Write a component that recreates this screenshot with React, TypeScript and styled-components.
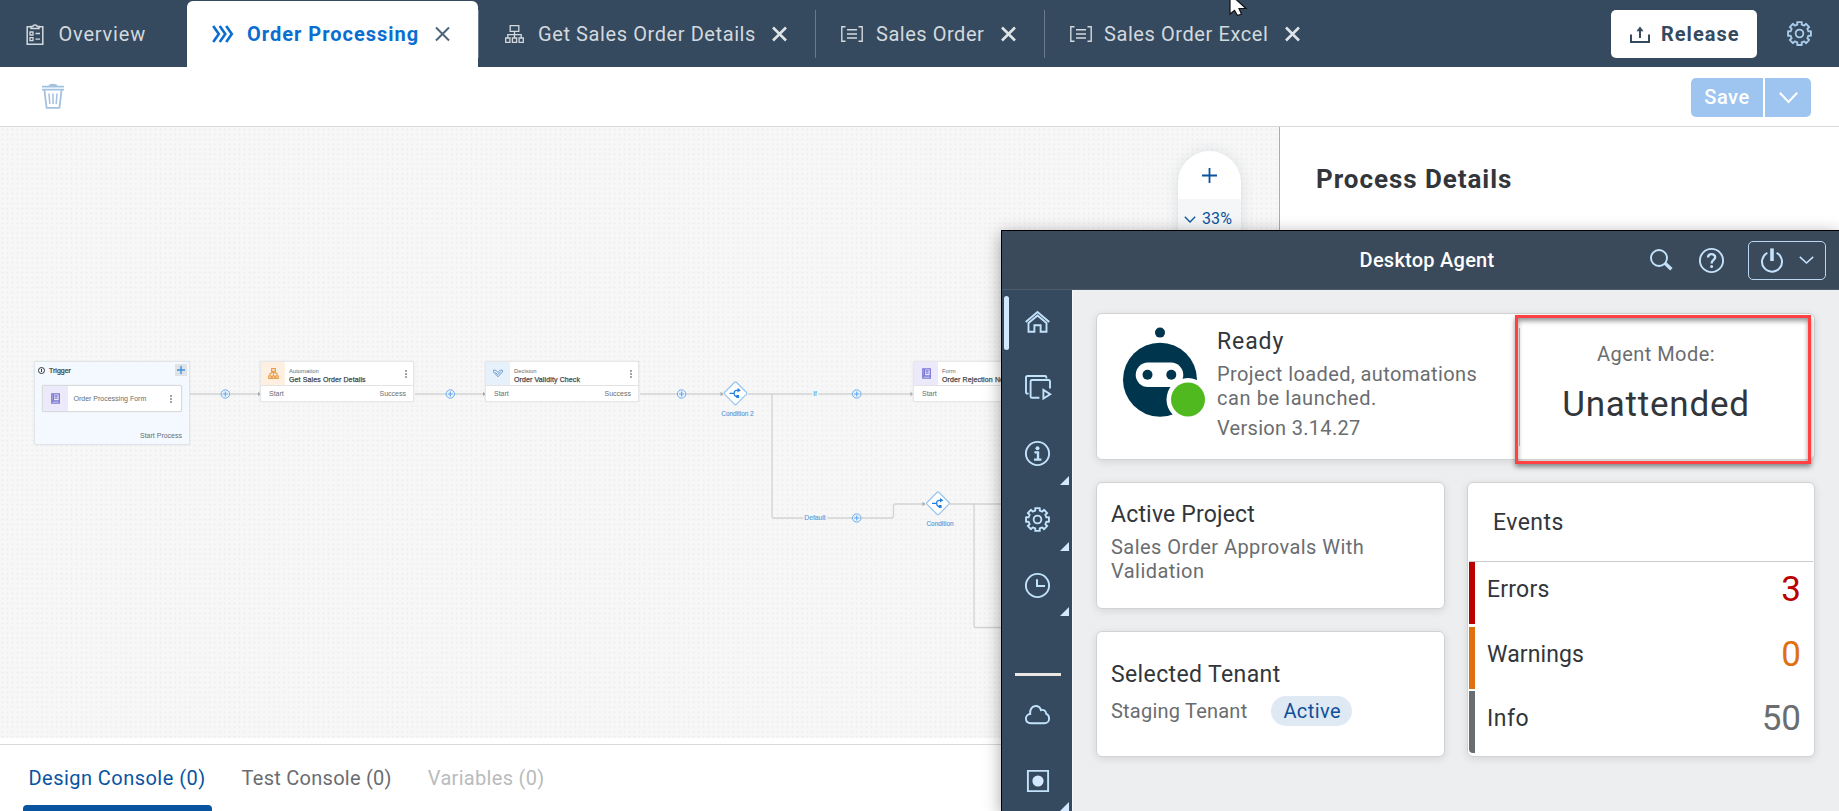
import React from 'react';
import styled, { createGlobalStyle, css } from 'styled-components';

const GlobalStyle = createGlobalStyle`
  *, *::before, *::after { box-sizing: border-box; }
  html, body { margin: 0; padding: 0; height: 100%; overflow: hidden; }
  body { font-family: Roboto, "Liberation Sans", sans-serif; font-size: 20px; line-height: 24px; color: #32363a; background: #fff; }
  svg { display: block; flex: none; overflow: visible; }
`;

/* ---------- shared ---------- */

const Text = styled.span<{ $ls?: number }>`
  white-space: nowrap;
  letter-spacing: ${(p) => p.$ls ?? 0.5}px;
`;

const Shell = styled.div`
  position: relative;
  display: flex;
  flex-direction: column;
  width: 1839px;
  height: 811px;
  overflow: hidden;
  background: #fff;
`;

/* ---------- header ---------- */

const TabBar = styled.header`
  display: flex;
  height: 67px;
  flex: none;
  align-items: stretch;
  background: #354a5f;
`;

const Tab = styled.div<{ $w: number; $active?: boolean; $sep?: boolean }>`
  position: relative;
  display: flex;
  align-items: center;
  width: ${(p) => p.$w}px;
  padding: 1px 29px 0 25px;
  color: #d3d9de;
  ${(p) =>
    p.$active &&
    css`
      margin-top: 1px;
      padding-top: 0;
      padding-right: 28px;
      background: #fff;
      border-radius: 6px 6px 0 0;
      color: #0a6ed1;
      font-weight: 700;
    `}
  ${(p) =>
    p.$sep &&
    css`
      &::after {
        content: '';
        position: absolute;
        right: ${p.$active ? -1 : 0}px;
        top: ${p.$active ? 9 : 10}px;
        width: 1.5px;
        height: 48px;
        background: #6b7b8d;
      }
    `}
`;

const TabIcon = styled.span<{ $w?: number; $in?: number }>`
  display: flex;
  width: ${(p) => p.$w ?? 35}px;
  padding-left: ${(p) => p.$in ?? 0}px;
  flex: none;
`;

const TabClose = styled.span`
  margin-left: auto;
`;

const HeaderActions = styled.div`
  display: flex;
  align-items: center;
  gap: 30px;
  margin-left: auto;
  padding-right: 27px;
`;

const ReleaseButton = styled.button`
  display: flex;
  align-items: center;
  gap: 11px;
  width: 146px;
  height: 48px;
  padding: 0 0 0 19px;
  border: 0;
  border-radius: 5px;
  background: #fff;
  color: #354a5f;
  font: 700 20px/24px Roboto, sans-serif;
  margin-top: 1px;
`;

/* ---------- toolbar ---------- */

const Toolbar = styled.div`
  display: flex;
  align-items: center;
  justify-content: space-between;
  flex: none;
  height: 60px;
  padding: 0 28px 0 42px;
  border-bottom: 1px solid #d9d9d9;
  background: #fff;
`;

const SaveGroup = styled.div`
  display: flex;
  gap: 2px;
  height: 39px;
  margin-top: 1px;
`;

const SavePart = styled.button<{ $w: number; $side: 'left' | 'right' }>`
  display: flex;
  align-items: center;
  justify-content: center;
  width: ${(p) => p.$w}px;
  padding: 0;
  border: 0;
  border-radius: ${(p) => (p.$side === 'left' ? '5px 0 0 5px' : '0 5px 5px 0')};
  background: #9dc5ef;
  color: #fff;
  font: 500 20px/24px Roboto, sans-serif;
`;

/* ---------- workspace ---------- */

const Workspace = styled.main`
  display: flex;
  flex: 1;
  min-height: 0;
`;

const DesignColumn = styled.section`
  display: flex;
  flex-direction: column;
  width: 1279px;
  flex: none;
`;

const Canvas = styled.div`
  position: relative;
  flex: 1;
  overflow: hidden;
  background-color: #f7f7f7;
  background-image: radial-gradient(circle at center, #e9e9e9 0.6px, rgba(247, 247, 247, 0) 1.2px);
  background-size: 4.95px 4.95px;
  font-family: 'Liberation Sans', Arial, sans-serif;
`;

const DetailsPanel = styled.aside`
  flex: 1;
  border-left: 1px solid #a9adb0;
  padding: 36px;
  background: #fff;
`;

const PanelTitle = styled.h2`
  margin: 0;
  font-size: 26px;
  line-height: 32px;
  font-weight: 700;
  letter-spacing: 0.95px;
`;

const ConsoleBar = styled.footer`
  display: flex;
  flex: none;
  height: 67px;
  margin-top: 6px;
  padding-left: 23px;
  border-top: 1px solid #d9d9d9;
`;

const ConsoleTab = styled.div<{ $state: 'active' | 'normal' | 'off' }>`
  display: flex;
  position: relative;
  align-items: center;
  padding: 0 6px 0 5.5px;
  margin-right: 24.500px;
  color: ${(p) => ({ active: '#0854a0', normal: '#6a6d70', off: '#b9bbbd' })[p.$state]};
  ${(p) =>
    p.$state === 'active' &&
    css`
      &::after {
        content: '';
        position: absolute;
        left: 0;
        right: 0;
        bottom: 0;
        height: 6px;
        border-radius: 4px 4px 0 0;
        background: #0854a0;
      }
    `}
`;

const ZoomControl = styled.div`
  position: absolute;
  left: 1178px;
  top: 24px;
  width: 63px;
  height: 160px;
  border-radius: 32px;
  overflow: hidden;
  background: #fff;
  box-shadow: 0 0 14px rgba(80, 100, 120, 0.16);
  font-family: Roboto, sans-serif;
`;

const ZoomPlus = styled.div`
  display: flex;
  align-items: center;
  justify-content: center;
  height: 48px;
`;

const ZoomLevel = styled.div`
  display: flex;
  align-items: center;
  gap: 6px;
  height: 40px;
  padding-left: 6px;
  background: #f5f6f7;
  color: #0854a0;
  font-size: 16px;
`;

/* ---------- diagram ---------- */

const Wires = styled.svg`
  position: absolute;
  left: 0;
  top: 0;
`;

const NodeBox = styled.div<{ $x: number }>`
  position: absolute;
  left: ${(p) => p.$x}px;
  top: 234px;
  width: 154px;
  height: 41px;
  border: 1px solid #e6e7e8;
  border-radius: 2px;
  background: #fff;
  box-shadow: 0 0 2px rgba(0, 0, 0, 0.1);
  font-size: 7px;
  line-height: 9px;
  color: #6a6d70;
`;

const NodeTop = styled.div`
  display: flex;
  height: 24px;
  border-bottom: 1px solid #e3e3e3;
`;

const NodeIcon = styled.div<{ $bg: string }>`
  display: flex;
  align-items: center;
  justify-content: center;
  width: 24px;
  background: ${(p) => p.$bg};
`;

const NodeTitles = styled.div`
  display: flex;
  flex-direction: column;
  flex: 1;
  padding: 5px 0 0 4px;
  white-space: nowrap;
`;

const NodeKind = styled.span`
  font-size: 5.9px;
  line-height: 8px;
`;

const NodeTitle = styled.span`
  font-size: 7px;
  line-height: 9px;
  letter-spacing: 0.12px;
  color: #46494d;
  -webkit-text-stroke: 0.25px #46494d;
`;

const NodePorts = styled.div`
  display: flex;
  justify-content: space-between;
  padding: 3px 7px 0 8px;
`;

const Kebab = styled.div`
  display: flex;
  flex-direction: column;
  gap: 1px;
  margin: 7.5px 6px 0 0;
  &::before, &::after { content: ''; width: 1.6px; height: 2px; background: #a3a6aa; }
`;

const KebabDot = styled.i`
  width: 1.6px;
  height: 2px;
  background: #a3a6aa;
`;

const TriggerBox = styled.div`
  position: absolute;
  left: 34px;
  top: 234px;
  width: 156px;
  height: 84px;
  display: flex;
  flex-direction: column;
  padding: 2px 2px 3px 3px;
  border: 1px solid #dfe5ea;
  border-radius: 2px;
  background: #f3f9ff;
  box-shadow: 0 0 2px rgba(0, 0, 0, 0.1);
  font-size: 7px;
  line-height: 9px;
  color: #6a6d70;
`;

const TriggerHead = styled.div`
  display: flex;
  align-items: center;
  gap: 4px;
  height: 12px;
  color: #32363a;
  -webkit-text-stroke: 0.2px #32363a;
`;

const AddTrigger = styled.div`
  display: flex;
  align-items: center;
  justify-content: center;
  width: 12px;
  height: 12px;
  margin-left: auto;
  background: #e0e3e6;
`;

const TriggerItem = styled.div`
  display: flex;
  align-items: center;
  width: 140px;
  height: 27px;
  margin: 9px 0 0 4px;
  border: 1px solid #d8dadc;
  border-radius: 2px;
  background: #fff;
  overflow: hidden;
  box-shadow: 0 0 1px rgba(0, 0, 0, 0.2);
  & > ${NodeIcon} { height: 100%; width: 25px; margin-right: 5.5px; }
  & > ${Kebab} { margin: 0 9px 0 auto; }
`;

const TriggerOut = styled.div`
  margin: auto 5px 1px auto;
`;

const Caption = styled.span<{ $x: number; $y: number; $size?: number; $fill?: boolean }>`
  position: absolute;
  left: ${(p) => p.$x}px;
  top: ${(p) => p.$y}px;
  transform: translateX(-50%);
  padding: 0 1px;
  white-space: nowrap;
  font-size: ${(p) => p.$size ?? 6.4}px;
  line-height: 8px;
  color: #5a9fe0;
  -webkit-text-stroke: 0.15px #5a9fe0;
  background: ${(p) => (p.$fill ? '#f7f7f7' : 'transparent')};
`;

/* ---------- agent window ---------- */

const AgentWindow = styled.section`
  position: absolute;
  left: 1001px;
  top: 230px;
  width: 838px;
  height: 581px;
  display: flex;
  flex-direction: column;
  border-left: 1px solid #000;
  border-top: 1px solid #000;
  box-shadow: 0 4px 16px rgba(0, 0, 0, 0.36);
  background: #edeef0;
`;

const AgentHeader = styled.header`
  display: grid;
  grid-template-columns: 1fr auto 1fr;
  align-items: center;
  height: 59px;
  flex: none;
  padding: 0 13px 0 0;
  border-bottom: 1px solid #4d5c6b;
  background: #3a4a5b;
  color: #fff;
`;

const AgentTitle = styled(Text)`
  grid-column: 2;
  font-weight: 500;
  margin-left: 26px;
`;

const AgentTools = styled.div`
  display: flex;
  align-items: center;
  justify-content: flex-end;
`;

const SearchButton = styled.span`
  margin-right: 26px;
`;

const PowerButton = styled.button`
  display: flex;
  align-items: center;
  gap: 16px;
  width: 78px;
  height: 39px;
  margin-left: 24px;
  padding: 0 0 0 12px;
  border: 1px solid #b9d6f2;
  border-radius: 5px;
  background: transparent;
`;

const AgentBody = styled.div`
  display: flex;
  flex: 1;
  min-height: 0;
`;

const Rail = styled.nav`
  display: flex;
  flex-direction: column;
  flex: none;
  width: 71px;
  border-right: 1px solid #f6f7f8;
  background: #354a5f;
`;

const RailItem = styled.div<{ $h: number; $active?: boolean; $more?: boolean; $up?: number }>`
  position: relative;
  display: flex;
  align-items: center;
  justify-content: center;
  flex: none;
  height: ${(p) => p.$h}px;
  padding: 0 0 ${(p) => p.$up ?? 1}px 1px;
  ${(p) =>
    p.$active &&
    css`
      &::before {
        content: '';
        position: absolute;
        left: 2px;
        top: 6px;
        width: 5px;
        height: 54px;
        border-radius: 3px;
        background: #d1e8ff;
      }
    `}
  ${(p) =>
    p.$more &&
    css`
      &::after {
        content: '';
        position: absolute;
        right: 3px;
        bottom: 2px;
        border-left: 9px solid transparent;
        border-bottom: 9px solid #d1e8ff;
      }
    `}
`;

const RailDivider = styled.hr`
  width: 46px;
  height: 3px;
  margin: 55px 0 0 13px;
  border: 0;
  background: #ebe7e4;
  flex: none;
`;

const Board = styled.div`
  display: grid;
  grid-template-columns: 349px 348px;
  grid-template-rows: 147px 127px 126px;
  gap: 22px;
  padding: 23px 0 0 23px;
`;

const Card = styled.article<{ $top?: number }>`
  position: relative;
  padding: ${(p) => p.$top ?? 0}px 14px 0;
  border: 1px solid #d0d2d4;
  border-radius: 6px;
  background: #fff;
  box-shadow: 0 2px 8px rgba(0, 0, 0, 0.1);
  color: #6a6d70;
`;

const StatusCard = styled(Card)`
  grid-column: 1 / 3;
  display: flex;
  padding: 0;
`;

const Robot = styled.svg`
  margin: 12px 0 0 23px;
`;

const CardHeading = styled.h3<{ $ls?: number }>`
  margin: 0;
  font-size: 23px;
  line-height: 28px;
  font-weight: 400;
  letter-spacing: ${(p) => p.$ls ?? 0.3}px;
  color: #32363a;
  white-space: nowrap;
`;

const StatusText = styled.div`
  display: flex;
  flex-direction: column;
  width: 302px;
  padding: 14px 0 0;
  margin-left: 10px;
  ${CardHeading} { margin-bottom: 6px; }
`;

const VersionText = styled(Text)`
  margin-top: 6px;
`;

const ModePane = styled.div`
  display: flex;
  flex: 1;
  flex-direction: column;
  align-items: center;
  height: 118px;
  margin-top: 14px;
  padding: 14px 22px 0 0;
  border-left: 1px solid #b9bbbd;
`;

const ModeValue = styled.strong`
  margin-top: 18px;
  font-size: 35px;
  line-height: 42px;
  font-weight: 400;
  letter-spacing: 0.76px;
  color: #32363a;
`;

const Highlight = styled.div`
  position: absolute;
  left: 418px;
  top: 1px;
  width: 296px;
  height: 149px;
  border: 3px solid #ff4141;
  box-shadow: 0 3px 5px rgba(0, 0, 0, 0.42), inset 0 3px 5px rgba(0, 0, 0, 0.42);
`;

const ProjectName = styled.p`
  margin: 6px 0 0;
  letter-spacing: 0.45px;
`;

const TenantRow = styled.div`
  display: flex;
  align-items: center;
  gap: 24px;
  height: 30px;
  margin-top: 7px;
`;

const Pill = styled.span`
  display: flex;
  align-items: center;
  height: 30px;
  padding: 0 11px 0 12px;
  border-radius: 15px;
  background: #dfe9f4;
  color: #0f4f9a;
  letter-spacing: 0.4px;
`;

const EventsCard = styled(Card)`
  grid-column: 2;
  grid-row: 2 / 4;
  display: flex;
  flex-direction: column;
  padding: 0 1px;
`;

const EventsHead = styled.div`
  display: flex;
  align-items: center;
  height: 79px;
  padding: 1px 0 0 24px;
  border-bottom: 1px solid #c9cbcd;
`;

const EventRow = styled.div<{ $color: string; $last?: boolean }>`
  display: flex;
  align-items: center;
  justify-content: space-between;
  height: 62px;
  margin-bottom: ${(p) => (p.$last ? 0 : 2.5)}px;
  padding: 0 12px 6px 12px;
  border-left: 6px solid ${(p) => p.$color};
  border-radius: ${(p) => (p.$last ? '0 0 0 4px' : '0')};
`;

const EventCount = styled.span<{ $color: string }>`
  font-size: 35px;
  line-height: 42px;
  color: ${(p) => p.$color};
`;

const Pointer = styled.svg`
  position: absolute;
  left: 1229px;
  top: -6px;
`;

/* ---------- icons ---------- */

const gearPath = (() => {
  const pts: string[] = [];
  const step = Math.PI / 4;
  const at = (r: number, a: number) => `${(12 + r * Math.sin(a)).toFixed(2)} ${(12 - r * Math.cos(a)).toFixed(2)}`;
  for (let i = 0; i < 8; i++) {
    const a = i * step;
    pts.push(at(8.8, a - 0.24), at(11.2, a - 0.2), at(11.2, a + 0.2), at(8.8, a + 0.24));
  }
  return `M${pts.join('L')}Z`;
})();

const Gear = ({ size = 25, color = '#b9dbf7' }: { size?: number; color?: string }) => (
  <svg width={size} height={size} viewBox="0 0 24 24" fill="none" stroke={color} strokeWidth="1.8" strokeLinejoin="round">
    <path d={gearPath} />
    <circle cx="12" cy="12" r="3.7" />
  </svg>
);

const CloseIcon = ({ color, w }: { color: string; w: number }) => (
  <svg width="15" height="16" viewBox="0 0 15 16" stroke={color} strokeWidth={w} fill="none">
    <path d="M1 1.5L14 14.5M14 1.5L1 14.5" />
  </svg>
);

const Clipboard = () => (
  <svg width="18" height="21" viewBox="0 0 18 21" fill="none" stroke="#d3d9de" strokeWidth="1.5">
    <path d="M5 2.8H1.2V20.2H16.8V2.8H13M5 4.6V2.6H6.8C7 .3 11 .3 11.2 2.6H13V4.6Z" />
    <path d="M4 8h3v3H4zM4 13.6h3v3H4zM9.5 9.5H14M9.5 15.1H14" strokeWidth="1.3" />
  </svg>
);

const Chevrons = () => (
  <svg width="22" height="18" viewBox="0 0 22 18" fill="none" stroke="#0a6ed1" strokeWidth="2.6">
    <path d="M1.200 1L6.800 9L1.200 17M7.700 1L13.300 9L7.700 17M14.200 1L19.800 9L14.200 17" />
  </svg>
);

const Hierarchy = () => (
  <svg width="19" height="18" viewBox="0 0 19 18" fill="none" stroke="#d3d9de" strokeWidth="1.3">
    <path d="M5.2.7h8.6v5.6H5.2zM9.5 6.3V13M2.8 13V9.6h13.4V13M.7 13h4.2v4.3H.7zM7.4 13h4.2v4.3H7.4zM14.1 13h4.2v4.3h-4.2z" />
  </svg>
);

const DataType = () => (
  <svg width="22" height="16" viewBox="0 0 22 16" fill="none" stroke="#d3d9de" strokeWidth="1.4">
    <path d="M4.5.8H.8V15.2H4.5M17.5.8H21.2V15.2H17.5M6 3.8H16M6 8H16M6 12H16" />
  </svg>
);

const Upload = () => (
  <svg width="20" height="17" viewBox="0 0 20 17" fill="none" stroke="#354a5f" strokeWidth="2">
    <path d="M1 8.500V16H19V8.500M10 12V3" />
    <path d="M6.4 5.2L10 .4L13.6 5.2Z" fill="#354a5f" stroke="none" />
  </svg>
);

const Trash = () => (
  <svg width="22" height="25" viewBox="0 0 22 25" fill="none" stroke="#a3c1e0" strokeWidth="1.8">
    <path d="M0 2.6H22M0 5.6H22M7.5 2C8 .3 14 .3 14.5 2" />
    <path d="M2.4 6L4.6 23.8H17.4L19.6 6" />
    <path d="M7 9.5L7.8 20M11 9.5V20M15 9.5L14.2 20" strokeWidth="1.5" />
  </svg>
);

const Chevron = ({ w, h, color, sw = 1.6 }: { w: number; h: number; color: string; sw?: number }) => (
  <svg width={w} height={h} viewBox={`0 0 ${w} ${h}`} fill="none" stroke={color} strokeWidth={sw}>
    <path d={`M.8 .8L${w / 2} ${h - 1}L${w - 0.8} .8`} />
  </svg>
);

const rail = { fill: 'none', stroke: '#c3e2fb', strokeWidth: 1.9 };

const HomeIcon = () => (
  <svg width="25" height="22" viewBox="0 0 25 22" {...rail}>
    <path d="M.7 11L12.5 1L24.3 11" />
    <path d="M3.5 12L12.5 4.6L21.5 12V20.8H15.6V14.2H9.4V20.8H3.5Z" />
  </svg>
);

const ProjectsIcon = () => (
  <svg width="26" height="25" viewBox="0 0 26 25" {...rail}>
    <path d="M3.6 18.6H2.4Q1 18.6 1 17.2V2.4Q1 1 2.4 1H20Q21.4 1 21.4 2.4V3.6" />
    <path d="M14.4 22.8H7Q5.6 22.8 5.6 21.4V6.4Q5.6 5 7 5H23.6Q25 5 25 6.4V13.4" />
    <path d="M18.4 14.9L25.2 19.2L18.4 23.6Z" />
  </svg>
);

const InfoIcon = () => (
  <svg width="25" height="25" viewBox="0 0 25 25" {...rail}>
    <circle cx="12.5" cy="12.5" r="11.6" />
    <circle cx="12.5" cy="7.2" r="2" fill="#c3e2fb" stroke="none" />
    <path d="M9.4 11.4H13V18.4M9 18.6H16.4" strokeWidth="2.4" />
  </svg>
);

const ClockIcon = () => (
  <svg width="25" height="25" viewBox="0 0 25 25" {...rail}>
    <circle cx="12.5" cy="12.5" r="11.6" />
    <path d="M12 6.2V13H20" strokeWidth="2" />
  </svg>
);

const CloudIcon = () => (
  <svg width="25" height="19" viewBox="0 0 25 19" {...rail}>
    <path d="M6 18.2C2.6 18.2.9 16 .9 13.6C.9 11.4 2.6 9.2 5.2 9C4.6 4.6 7 1 10.6 1C13.6 1 15.4 2.8 16 5.2C18.6 4.2 21 5.8 21.2 8.8C23 9.4 24.1 11.4 24.1 13.4C24.1 16.2 22 18.2 19.6 18.2Z" />
  </svg>
);

const RecordIcon = () => (
  <svg width="22" height="22" viewBox="0 0 22 22" {...rail}>
    <path d="M.9.9H21.1V21.1H.9Z" />
    <circle cx="11" cy="11" r="5.6" fill="#d1e8ff" stroke="none" />
  </svg>
);

const SearchIcon = () => (
  <svg width="23" height="22" viewBox="0 0 23 22" fill="none" stroke="#c3e2fb">
    <circle cx="9" cy="9" r="8" strokeWidth="1.9" />
    <path d="M14.8 14L21.4 20.2" strokeWidth="3.4" />
  </svg>
);

const HelpIcon = () => (
  <svg width="25" height="25" viewBox="0 0 25 25" {...rail}>
    <circle cx="12.5" cy="12.5" r="11.6" />
    <path d="M9 9.6C9 5 16.2 5.2 16.2 9.2C16.2 12 12.6 11.8 12.6 15.4" strokeWidth="2.4" />
    <circle cx="12.6" cy="18.6" r="1.5" fill="#c3e2fb" stroke="none" />
  </svg>
);

const PowerIcon = () => (
  <svg width="22" height="25" viewBox="0 0 22 25" fill="none" stroke="#c3e2fb">
    <path d="M6.4 4.8A10 10 0 1 0 15.6 4.8" strokeWidth="2" />
    <path d="M11 .4V13" strokeWidth="3.6" />
  </svg>
);

const RobotArt = () => (
  <Robot width="87" height="95" viewBox="1120 326 87 95">
    <g fill="#00364d">
      <circle cx="1160" cy="332.6" r="5" />
      <circle cx="1160" cy="379.7" r="37" />
    </g>
    <rect x="1135.7" y="362.6" width="47.6" height="24.4" rx="12.2" fill="#fff" />
    <circle cx="1147.5" cy="374.8" r="5" fill="#00364d" />
    <circle cx="1171.3" cy="374.8" r="5" fill="#00364d" />
    <circle cx="1188" cy="399.5" r="21.5" fill="#fff" />
    <circle cx="1188" cy="399.5" r="17" fill="#4fb91f" />
  </Robot>
);

const FormGlyph = () => (
  <svg width="9" height="11" viewBox="0 0 9 11" fill="none" stroke="#7d77d3" strokeWidth="1.3">
    <path d="M.8 .8H8.3V10.2H.8ZM2.4 1V8M1 8H8M3.6 3H6.6M3.6 5.2H6.6" />
  </svg>
);

const AutomationGlyph = () => (
  <svg width="11" height="11" viewBox="0 0 11 11" fill="none" stroke="#e8a050" strokeWidth="1.2">
    <path d="M3.6.7H7.4V3.4H3.6ZM5.5 3.4V8M2 8V5.6L5.5 4L9 5.6V8M.7 8H3.2V10.3H.7ZM4.3 8H6.7V10.3H4.3ZM7.8 8H10.3V10.3H7.8Z" />
  </svg>
);

const DecisionGlyph = () => (
  <svg width="10" height="9" viewBox="0 0 10 9" fill="none" stroke="#6f9fce" strokeWidth="1">
    <path d="M.6 1.2H2.8L5 3.4L7.2 1.2H9.4V3L5 7.8L.6 3ZM2.4 3.4L4.6 5.6L7.8 2.8" />
  </svg>
);

const Split = ({ x, y }: { x: number; y: number }) => (
  <g transform={`translate(${x} ${y})`}>
    <rect x="-8.4" y="-8.4" width="16.8" height="16.8" rx="1.2" transform="rotate(45)" fill="#fff" stroke="#98c4f0" strokeWidth="1.2" />
    <g fill="none" stroke="#2180e0" strokeWidth="1.2">
      <path d="M-6 0H-1.4M3.4 -3H1.2Q-1.4 -3 -1.4 0Q-1.4 3 1.2 3.4H2" />
      <path d="M2 -5.2L5.4 -3L2 -.8ZM.8 1.6H3.6V4.6H.8Z" fill="#2180e0" stroke="none" />
    </g>
  </g>
);

const AddPoint = ({ x, y }: { x: number; y: number }) => (
  <g transform={`translate(${x} ${y})`} fill="#e9f3fd" stroke="#64a6e6" strokeWidth="0.9">
    <circle r="4.2" />
    <path d="M-2.6 0H2.6M0 -2.6V2.6" strokeWidth="1.1" />
  </g>
);

const DiagramWires = () => (
  <Wires width="1279" height="611" viewBox="0 127 1279 611">
    <g fill="none" stroke="#d2d3d4" strokeWidth="1.3">
      <path d="M190 394H260M415 394H485M640 394H723M748 394H912M760 394H770Q772 394 772 396V516Q772 518 774 518H891.5Q893.5 518 893.5 516V506Q893.5 504 895.5 504H925M950 504H1010M962 504H972Q974 504 974 506V625.5Q974 627.5 976 627.5H1010" />
    </g>
    <g fill="#a9abad">
      <path d="M258 391.8L260.6 394L258 396.2ZM483 391.8L485.6 394L483 396.2ZM720.5 391.8L723.5 394L720.5 396.2ZM910.5 391.8L913 394L910.5 396.2ZM922.5 501.8L925.5 504L922.5 506.2Z" />
    </g>
    <AddPoint x={225.3} y={394} />
    <AddPoint x={450.3} y={394} />
    <AddPoint x={681.6} y={394} />
    <AddPoint x={856.7} y={394} />
    <AddPoint x={856.7} y={518} />
    <Split x={735.5} y={393.3} />
    <Split x={938} y={503.3} />
  </Wires>
);

type NodeProps = { x: number; kind: string; title: string; bg: string; icon: React.ReactNode };

const FlowNode = ({ x, kind, title, bg, icon }: NodeProps) => (
  <NodeBox $x={x}>
    <NodeTop>
      <NodeIcon $bg={bg}>{icon}</NodeIcon>
      <NodeTitles>
        <NodeKind>{kind}</NodeKind>
        <NodeTitle>{title}</NodeTitle>
      </NodeTitles>
      <Kebab>
        <KebabDot />
      </Kebab>
    </NodeTop>
    <NodePorts>
      <span>Start</span>
      <span>Success</span>
    </NodePorts>
  </NodeBox>
);

/* ---------- page ---------- */

export default function App() {
  return (
    <Shell>
      <GlobalStyle />
      <TabBar>
        <Tab $w={187}>
          <TabIcon $w={33.5} $in={0.5}><Clipboard /></TabIcon>
          <Text $ls={0.8}>Overview</Text>
        </Tab>
        <Tab $w={291} $active $sep>
          <TabIcon><Chevrons /></TabIcon>
          <Text $ls={1}>Order Processing</Text>
          <TabClose><CloseIcon color="#4d6378" w={2} /></TabClose>
        </Tab>
        <Tab $w={338} $sep>
          <TabIcon $in={2}><Hierarchy /></TabIcon>
          <Text $ls={0.59}>Get Sales Order Details</Text>
          <TabClose><CloseIcon color="#dfe3e6" w={2.6} /></TabClose>
        </Tab>
        <Tab $w={229} $sep>
          <TabIcon><DataType /></TabIcon>
          <Text $ls={0.53}>Sales Order</Text>
          <TabClose><CloseIcon color="#dfe3e6" w={2.6} /></TabClose>
        </Tab>
        <Tab $w={284}>
          <TabIcon $w={34}><DataType /></TabIcon>
          <Text $ls={0.58}>Sales Order Excel</Text>
          <TabClose><CloseIcon color="#dfe3e6" w={2.6} /></TabClose>
        </Tab>
        <HeaderActions>
          <ReleaseButton>
            <Upload />
            <Text $ls={1}>Release</Text>
          </ReleaseButton>
          <Gear size={25} color="#a9cbea" />
        </HeaderActions>
      </TabBar>

      <Toolbar>
        <Trash />
        <SaveGroup>
          <SavePart $w={72} $side="left"><Text $ls={0.6}>Save</Text></SavePart>
          <SavePart $w={46} $side="right"><Chevron w={19} h={11} color="#fff" sw={2} /></SavePart>
        </SaveGroup>
      </Toolbar>

      <Workspace>
        <DesignColumn>
          <Canvas>
            <DiagramWires />
            <TriggerBox>
              <TriggerHead>
                <svg width="7" height="7" viewBox="0 0 7 7" fill="none" stroke="#32363a" strokeWidth="1">
                  <circle cx="3.5" cy="3.5" r="3" />
                  <path d="M3.5 1.8V5" />
                </svg>
                <span>Trigger</span>
                <AddTrigger>
                  <svg width="8" height="8" viewBox="0 0 8 8" stroke="#3f92e0" strokeWidth="1.4">
                    <path d="M4 0V8M0 4H8" />
                  </svg>
                </AddTrigger>
              </TriggerHead>
              <TriggerItem>
                <NodeIcon $bg="#ebe9fa"><FormGlyph /></NodeIcon>
                <span>Order Processing Form</span>
                <Kebab><KebabDot /></Kebab>
              </TriggerItem>
              <TriggerOut>Start Process</TriggerOut>
            </TriggerBox>
            <FlowNode x={260} kind="Automation" title="Get Sales Order Details" bg="#fef0e0" icon={<AutomationGlyph />} />
            <FlowNode x={485} kind="Decision" title="Order Validity Check" bg="#e6f1fb" icon={<DecisionGlyph />} />
            <FlowNode x={913} kind="Form" title="Order Rejection Notification" bg="#ebe9fa" icon={<FormGlyph />} />
            <Caption $x={737.5} $y={283}>Condition 2</Caption>
            <Caption $x={815} $y={263} $fill>If</Caption>
            <Caption $x={815} $y={386.5} $size={6.8} $fill>Default</Caption>
            <Caption $x={940} $y={393}>Condition</Caption>
            <ZoomControl>
              <ZoomPlus>
                <svg width="15" height="15" viewBox="0 0 15 15" stroke="#0854a0" strokeWidth="1.8">
                  <path d="M7.5 0V15M0 7.5H15" />
                </svg>
              </ZoomPlus>
              <ZoomLevel>
                <Chevron w={12} h={7} color="#0854a0" sw={1.3} />
                <Text $ls={0.1}>33%</Text>
              </ZoomLevel>
            </ZoomControl>
          </Canvas>
          <ConsoleBar>
            <ConsoleTab $state="active"><Text $ls={0.46}>Design Console (0)</Text></ConsoleTab>
            <ConsoleTab $state="normal"><Text $ls={0.26}>Test Console (0)</Text></ConsoleTab>
            <ConsoleTab $state="off"><Text $ls={0.3}>Variables (0)</Text></ConsoleTab>
          </ConsoleBar>
        </DesignColumn>
        <DetailsPanel>
          <PanelTitle>Process Details</PanelTitle>
        </DetailsPanel>
      </Workspace>

      <AgentWindow>
        <AgentHeader>
          <AgentTitle $ls={0.25}>Desktop Agent</AgentTitle>
          <AgentTools>
            <SearchButton><SearchIcon /></SearchButton>
            <HelpIcon />
            <PowerButton>
              <PowerIcon />
              <Chevron w={15} h={8} color="#c3e2fb" />
            </PowerButton>
          </AgentTools>
        </AgentHeader>
        <AgentBody>
          <Rail>
            <RailItem $h={65} $active><HomeIcon /></RailItem>
            <RailItem $h={66}><ProjectsIcon /></RailItem>
            <RailItem $h={66} $more><InfoIcon /></RailItem>
            <RailItem $h={66} $more><Gear color="#c3e2fb" /></RailItem>
            <RailItem $h={65} $more><ClockIcon /></RailItem>
            <RailDivider />
            <RailItem $h={77}><CloudIcon /></RailItem>
            <RailItem $h={60} $more $up={4}><RecordIcon /></RailItem>
          </Rail>
          <Board>
            <StatusCard>
              <RobotArt />
              <StatusText>
                <CardHeading $ls={0.9}>Ready</CardHeading>
                <Text $ls={0.4}>Project loaded, automations</Text>
                <Text $ls={0.58}>can be launched.</Text>
                <VersionText $ls={0.3}>Version 3.14.27</VersionText>
              </StatusText>
              <ModePane>
                <Text $ls={0.45}>Agent Mode:</Text>
                <ModeValue>Unattended</ModeValue>
              </ModePane>
              <Highlight />
            </StatusCard>
            <Card $top={18}>
              <CardHeading $ls={0.18}>Active Project</CardHeading>
              <ProjectName>
                Sales Order Approvals With
                <br />
                Validation
              </ProjectName>
            </Card>
            <Card $top={29}>
              <CardHeading $ls={0.38}>Selected Tenant</CardHeading>
              <TenantRow>
                <Text $ls={0.22}>Staging Tenant</Text>
                <Pill>Active</Pill>
              </TenantRow>
            </Card>
            <EventsCard>
              <EventsHead>
                <CardHeading $ls={0.46}>Events</CardHeading>
              </EventsHead>
              <EventRow $color="#bb0000">
                <CardHeading $ls={0.22}>Errors</CardHeading>
                <EventCount $color="#bb0000">3</EventCount>
              </EventRow>
              <EventRow $color="#e0700f">
                <CardHeading $ls={0.1}>Warnings</CardHeading>
                <EventCount $color="#e0700f">0</EventCount>
              </EventRow>
              <EventRow $color="#6a6d70" $last>
                <CardHeading $ls={0.5}>Info</CardHeading>
                <EventCount $color="#6a6d70">50</EventCount>
              </EventRow>
            </EventsCard>
          </Board>
        </AgentBody>
      </AgentWindow>

      <Pointer width="19" height="24" viewBox="0 0 19 24">
        <path d="M1 0V20L5.5 16.5L8.5 21.500L12.500 20L10 14.500H17Z" fill="#fff" stroke="#111" strokeWidth="1.2" />
      </Pointer>
    </Shell>
  );
}
